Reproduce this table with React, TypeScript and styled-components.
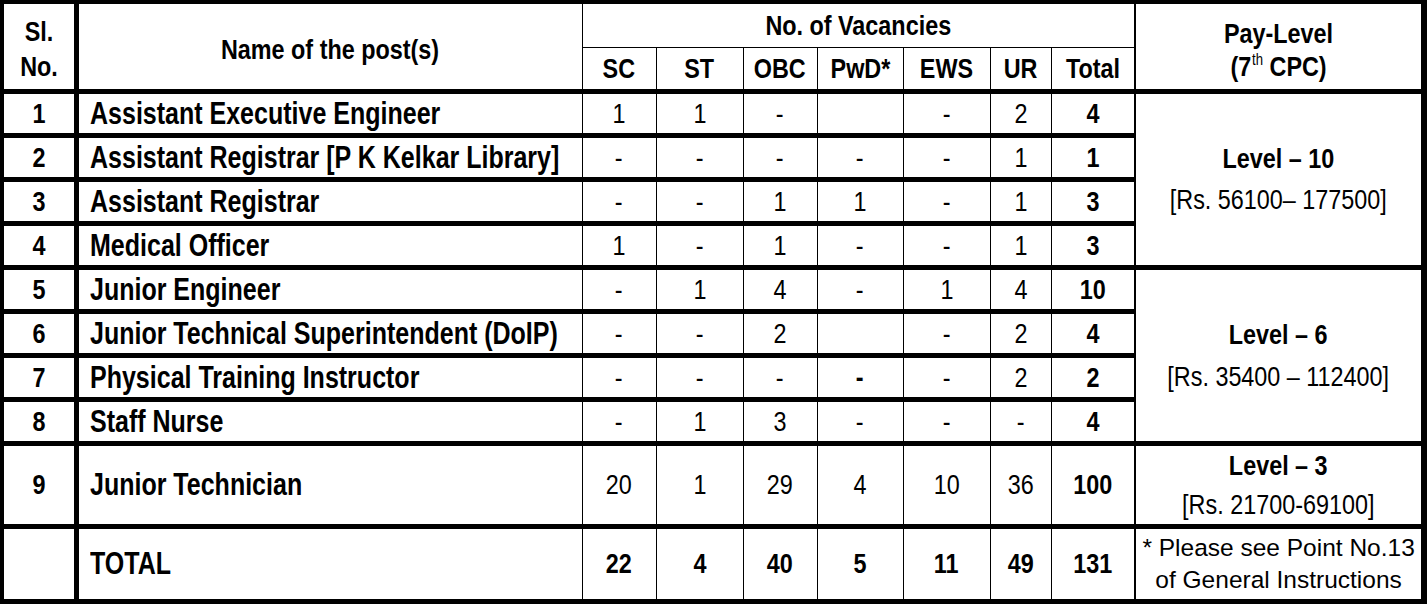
import styled, { createGlobalStyle } from "styled-components";

const GlobalStyle = createGlobalStyle`
  html, body {
    margin: 0;
    padding: 0;
    background: #fff;
  }
  body {
    font-family: "Liberation Sans", Arial, sans-serif;
    color: #000;
  }
`;

const Table = styled.table`
  width: 1427px;
  border-collapse: collapse;
  table-layout: fixed;
  border-top: 4px solid #000;
  border-left: 4px solid #000;
  border-right: 6px solid #000;
  border-bottom: 5px solid #000;
  font-size: 28.5px;
  line-height: 1;
`;

const Row = styled.tr<{ $height: number; $thin?: boolean }>`
  height: ${(p) => p.$height}px;
  border-bottom: ${(p) => (p.$thin ? "1px" : "5px")} solid #000;
`;

const Cell = styled.td<{
  $bold?: boolean;
  $left?: boolean;
  $sl?: boolean;
  $pay?: boolean;
  $drop?: number;
}>`
  border: 1px solid #000;
  border-right-width: ${(p) => (p.$sl ? "5px" : "1px")};
  border-left-width: ${(p) => (p.$pay ? "2px" : "1px")};
  padding: ${(p) => p.$drop ?? 0}px 0 0 ${(p) => (p.$left ? "11px" : "0")};
  text-align: ${(p) => (p.$left ? "left" : "center")};
  font-size: ${(p) => (p.$left ? "30.5px" : "inherit")};
  vertical-align: middle;
  font-weight: ${(p) => (p.$bold ? 700 : 400)};
  white-space: nowrap;
  overflow: hidden;
`;

const HeadCell = styled(Cell).attrs({ as: "th" })`
  font-weight: 700;
  font-size: 28.5px;
`;

/* Arial Narrow is not installed: squeeze Liberation Sans to its width */
const Narrow = styled.span<{ $origin?: string }>`
  display: inline-block;
  transform: scaleX(0.82);
  transform-origin: ${(p) => p.$origin ?? "center"};
`;

const Stack = styled.div<{ $lh: number }>`
  line-height: ${(p) => p.$lh}px;
`;

const Sup = styled.sup`
  font-size: 16px;
  font-weight: 400;
  vertical-align: 11px;
  line-height: 0;
  margin-left: 1px;
`;

const Light = styled.div`
  font-weight: 400;
`;

const Note = styled.div`
  font-size: 24.5px;
  line-height: 32px;
  font-weight: 400;
  white-space: nowrap;
`;

type Post = {
  no: number;
  name: string;
  v: string[];
  total: string;
  boldPwd?: boolean;
};

const posts: Post[] = [
  { no: 1, name: "Assistant Executive Engineer", v: ["1", "1", "-", "", "-", "2"], total: "4" },
  { no: 2, name: "Assistant Registrar [P K Kelkar Library]", v: ["-", "-", "-", "-", "-", "1"], total: "1" },
  { no: 3, name: "Assistant Registrar", v: ["-", "-", "1", "1", "-", "1"], total: "3" },
  { no: 4, name: "Medical Officer", v: ["1", "-", "1", "-", "-", "1"], total: "3" },
  { no: 5, name: "Junior Engineer", v: ["-", "1", "4", "-", "1", "4"], total: "10" },
  { no: 6, name: "Junior Technical Superintendent (DoIP)", v: ["-", "-", "2", "", "-", "2"], total: "4" },
  { no: 7, name: "Physical Training Instructor", v: ["-", "-", "-", "-", "-", "2"], total: "2", boldPwd: true },
  { no: 8, name: "Staff Nurse", v: ["-", "1", "3", "-", "-", "-"], total: "4" },
  { no: 9, name: "Junior Technician", v: ["20", "1", "29", "4", "10", "36"], total: "100" },
];

const payLevels: Record<number, { span: number; level: string; range: string; lh: number }> = {
  0: { span: 4, level: "Level – 10", range: "[Rs. 56100– 177500]", lh: 41 },
  4: { span: 4, level: "Level – 6", range: "[Rs. 35400 – 112400]", lh: 42 },
  8: { span: 1, level: "Level – 3", range: "[Rs. 21700-69100]", lh: 39 },
};

const cols = [74, 506, 74, 87, 74, 86, 87, 61, 84, 289];
const cats = ["SC", "ST", "OBC", "PwD*", "EWS", "UR", "Total"];
const grand = ["22", "4", "40", "5", "11", "49", "131"];

export default function App() {
  return (
    <>
      <GlobalStyle />
      <Table>
        <colgroup>
          {cols.map((w, i) => (
            <col key={i} style={{ width: w }} />
          ))}
        </colgroup>
        <thead>
          <Row $height={45} $thin>
            <HeadCell rowSpan={2} $sl $drop={6}>
              <Narrow>
                <Stack $lh={35}>
                  Sl.
                  <br />
                  No.
                </Stack>
              </Narrow>
            </HeadCell>
            <HeadCell rowSpan={2} $drop={6}>
              <Narrow>Name of the post(s)</Narrow>
            </HeadCell>
            <HeadCell colSpan={7}>
              <Narrow>No. of Vacancies</Narrow>
            </HeadCell>
            <HeadCell rowSpan={2} $pay $drop={8}>
              <Narrow>
                <Stack $lh={33}>
                  Pay-Level
                  <br />
                  (7<Sup>th</Sup> CPC)
                </Stack>
              </Narrow>
            </HeadCell>
          </Row>
          <Row $height={44}>
            {cats.map((c) => (
              <HeadCell key={c}>
                <Narrow>{c}</Narrow>
              </HeadCell>
            ))}
          </Row>
        </thead>
        <tbody>
          {posts.map((p, i) => {
            const pay = payLevels[i];
            return (
              <Row key={p.no} $height={p.no === 9 ? 83 : 44}>
                <Cell $bold $sl>
                  <Narrow>{p.no}</Narrow>
                </Cell>
                <Cell $bold $left>
                  <Narrow $origin="left">{p.name}</Narrow>
                </Cell>
                {p.v.map((x, j) => (
                  <Cell key={j} $bold={p.boldPwd && j === 3}>
                    <Narrow>{x}</Narrow>
                  </Cell>
                ))}
                <Cell $bold>
                  <Narrow>{p.total}</Narrow>
                </Cell>
                {pay && (
                  <Cell rowSpan={pay.span} $pay $bold>
                    <Narrow>
                      <Stack $lh={pay.lh}>
                        {pay.level}
                        <Light>{pay.range}</Light>
                      </Stack>
                    </Narrow>
                  </Cell>
                )}
              </Row>
            );
          })}
          <Row $height={75}>
            <Cell $sl />
            <Cell $bold $left>
              <Narrow $origin="left">TOTAL</Narrow>
            </Cell>
            {grand.map((g, j) => (
              <Cell key={j} $bold>
                <Narrow>{g}</Narrow>
              </Cell>
            ))}
            <Cell $pay>
              <Note>
                * Please see Point No.13
                <br />
                of General Instructions
              </Note>
            </Cell>
          </Row>
        </tbody>
      </Table>
    </>
  );
}
